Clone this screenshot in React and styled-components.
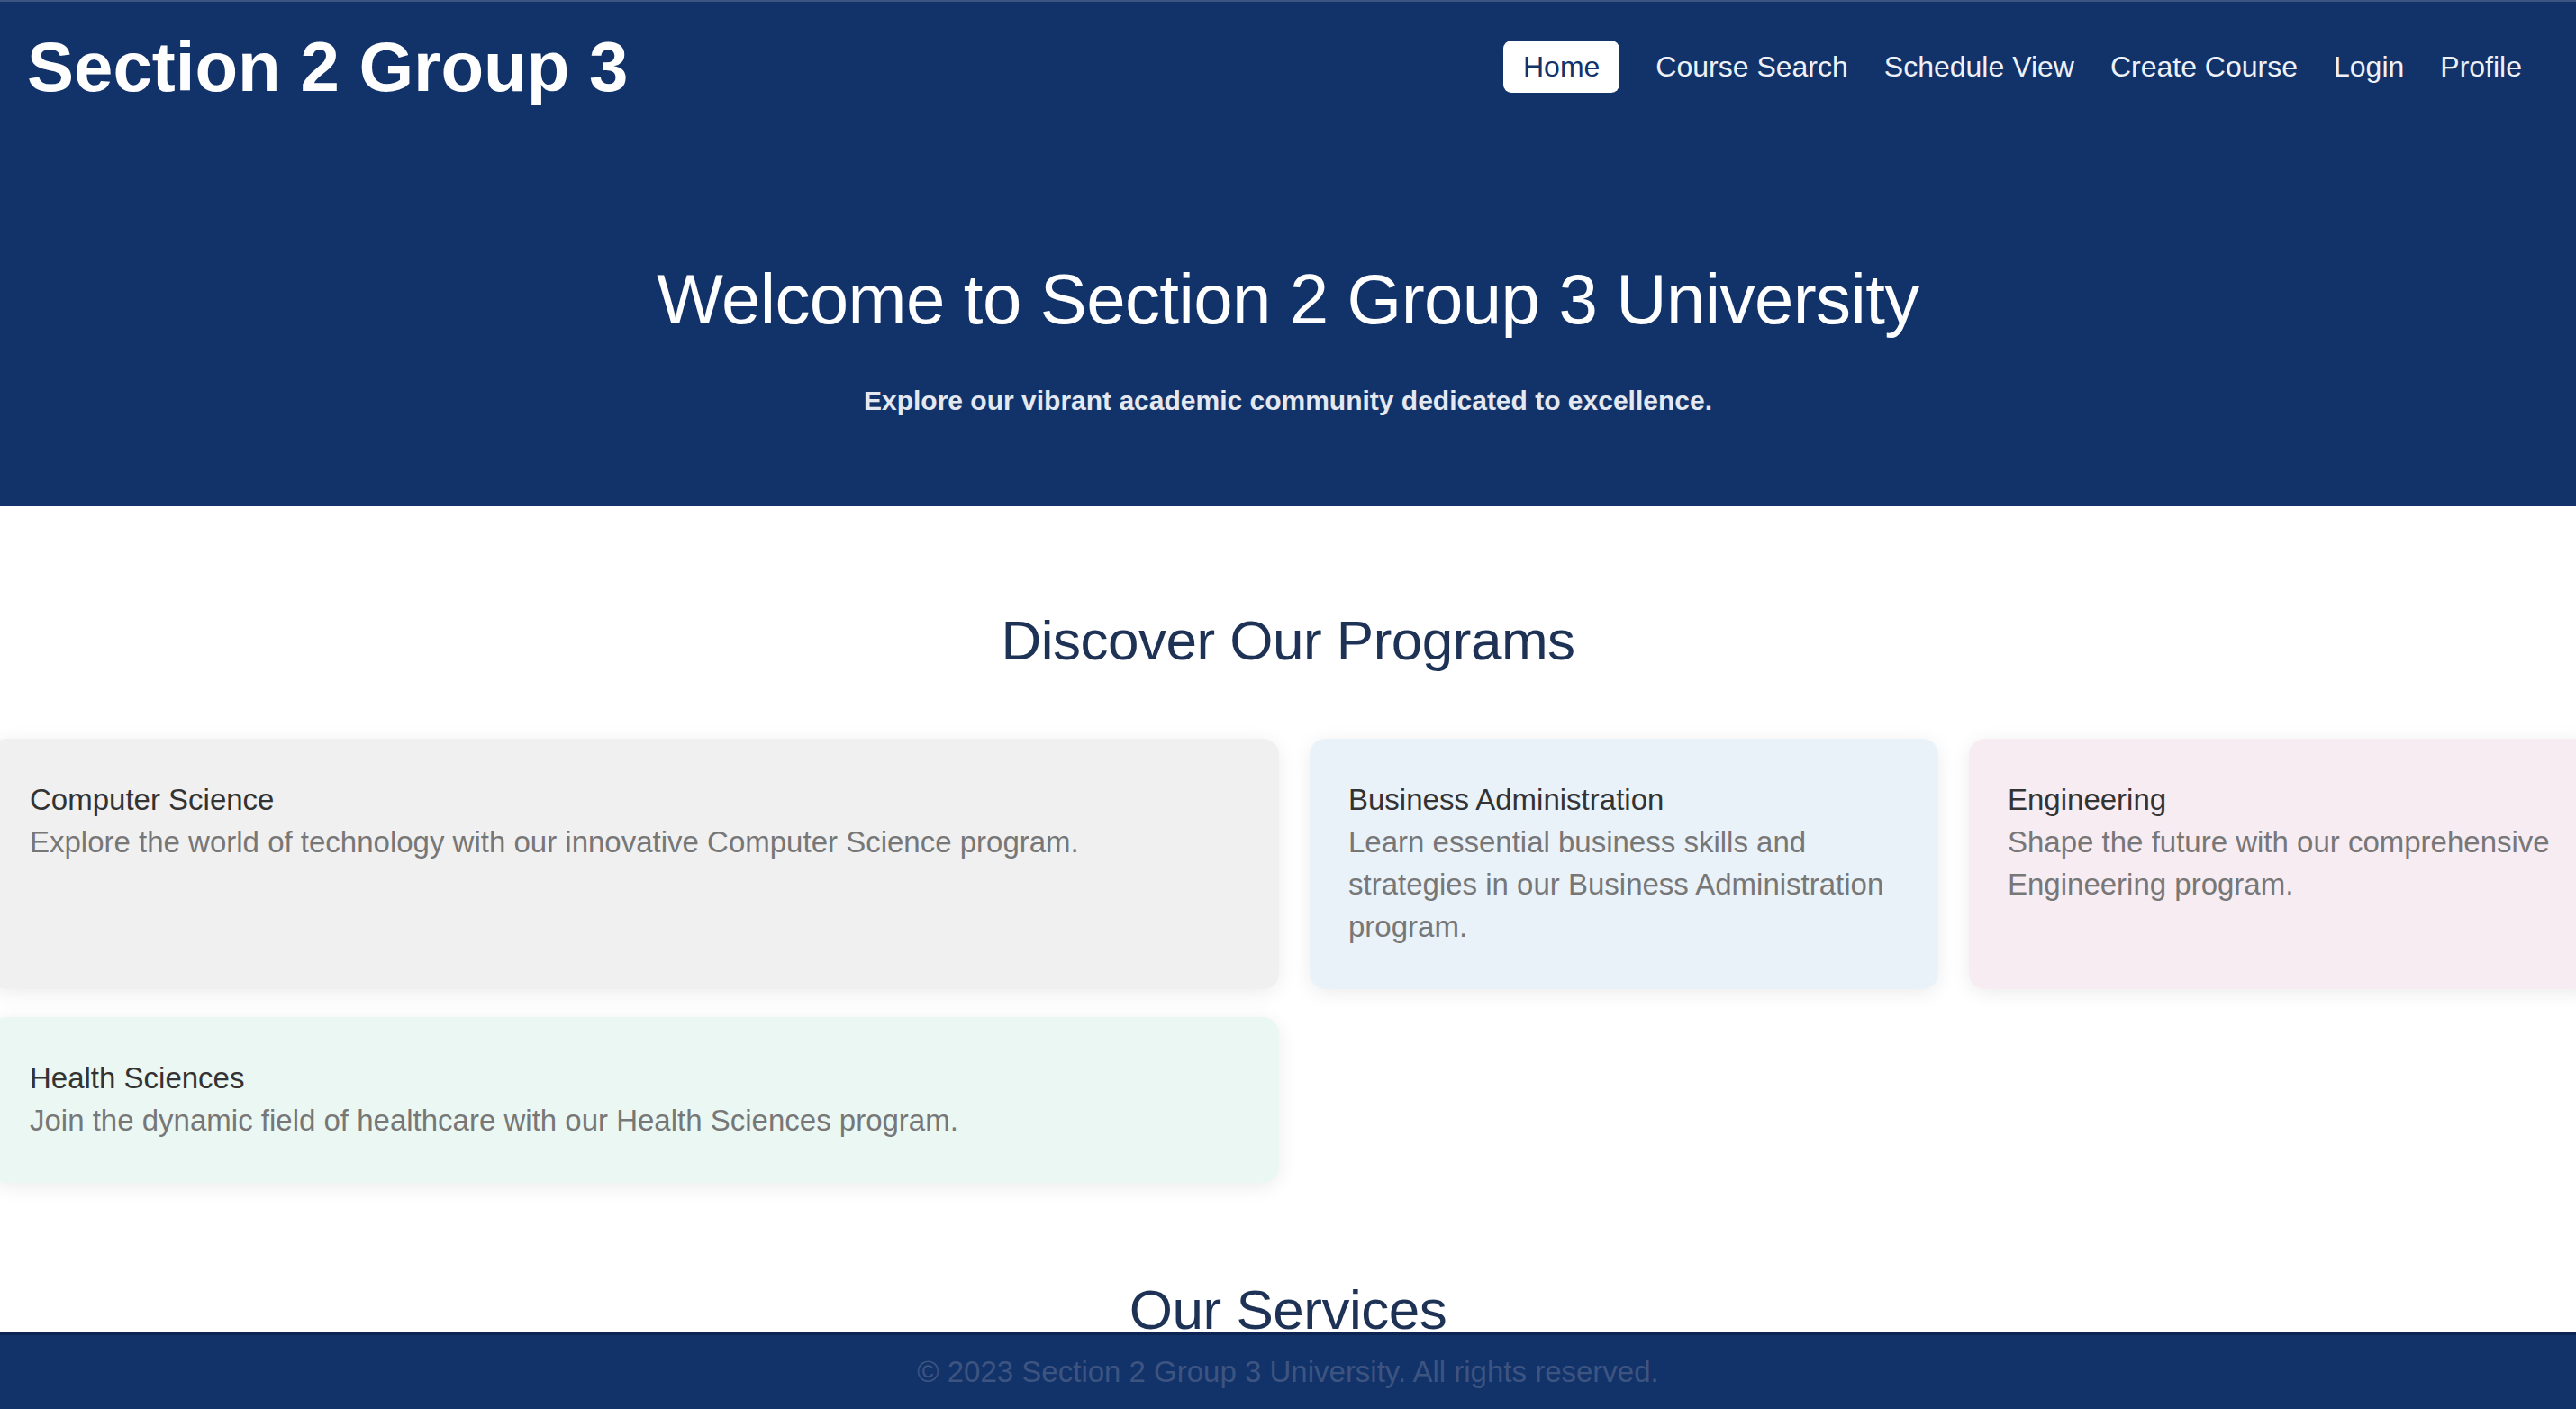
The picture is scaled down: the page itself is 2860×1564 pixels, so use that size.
import React from 'react';
import styled, { createGlobalStyle } from 'styled-components';

const navy = '#12326a';

const GlobalStyle = createGlobalStyle`
  html, body {
    margin: 0;
    padding: 0;
    background: #ffffff;
    overflow-x: hidden;
  }

  body {
    font-family: "Liberation Sans", Arial, sans-serif;
  }
`

const Page = styled.div`
  display: flex;
  flex-direction: column;
  min-height: 100vh;
  padding-bottom: 85px;
`

const Header = styled.header`
  display: flex;
  justify-content: space-between;
  align-items: center;
  background: ${navy};
  border-top: 2px solid #3d5582;
  height: 144px;
  padding: 0 40px 0 30px;
`

const Brand = styled.h1`
  margin: 0;
  font-size: 78px;
  line-height: 1;
  font-weight: 700;
  color: #ffffff;
`

const Nav = styled.nav`
  display: flex;
  align-items: center;
`

const NavLink = styled.a`
  font-size: 32px;
  line-height: 38px;
  color: #eef1f7;
  text-decoration: none;
  padding: 10px 20px;
  border-radius: 9px;

  ${(p) => p.$active && `
    background: #ffffff;
    color: ${navy};
    padding: 10px 22px;
    margin-right: 20px;
  `}
`

const Hero = styled.section`
  display: flex;
  flex-direction: column;
  align-items: center;
  background: ${navy};
  padding: 138px 0 97px;

  h2 {
    margin: 0;
    font-size: 78px;
    line-height: 96px;
    font-weight: 400;
    letter-spacing: -0.6px;
    color: #ffffff;
  }

  p {
    margin: 45px 0 0;
    font-size: 30px;
    line-height: 40px;
    font-weight: 700;
    color: #e4e8f0;
  }
`

const Section = styled.section`
  display: flex;
  flex-direction: column;
  align-items: center;
`

const SectionTitle = styled.h2`
  margin: ${(p) => p.$top}px 0 0;
  font-size: 62px;
  line-height: 74px;
  font-weight: 400;
  letter-spacing: -0.5px;
  color: #1e3256;
`

const CardGrid = styled.div`
  align-self: flex-start;
  display: grid;
  grid-template-columns: repeat(4, 698px);
  column-gap: 34px;
  row-gap: 31px;
  margin: 72px 0 0 -10px;
`

const Card = styled.div`
  grid-column: span ${(p) => p.$span};
  background: ${(p) => p.$bg};
  border-radius: 18px;
  box-shadow: 0 4px 22px rgba(0, 0, 0, 0.08);
  padding: 44px 43px 46px;

  h3 {
    margin: 0;
    font-size: 33px;
    line-height: 47px;
    font-weight: 400;
    color: #333333;
  }

  p {
    margin: 0;
    font-size: 33px;
    line-height: 47px;
    color: #777777;
  }
`

const ServiceList = styled.div`
  height: 400px;
`

const Footer = styled.footer`
  position: fixed;
  left: 0;
  right: 0;
  bottom: 0;
  height: 85px;
  display: flex;
  align-items: center;
  justify-content: center;
  background: ${navy};
  border-top: 3px solid #0d2552;
  box-sizing: border-box;

  p {
    margin: 0;
    font-size: 33px;
    color: #3d5480;
  }
`

const programs = [
  { title: 'Computer Science', text: 'Explore the world of technology with our innovative Computer Science program.', bg: '#f0f0f1', span: 2 },
  { title: 'Business Administration', text: 'Learn essential business skills and strategies in our Business Administration program.', bg: '#eaf2f9', span: 1 },
  { title: 'Engineering', text: 'Shape the future with our comprehensive Engineering program.', bg: '#f8ecf3', span: 1 },
  { title: 'Health Sciences', text: 'Join the dynamic field of healthcare with our Health Sciences program.', bg: '#ebf7f3', span: 2 },
];

const links = ['Home', 'Course Search', 'Schedule View', 'Create Course', 'Login', 'Profile'];

function App() {
  return (
    <Page>
      <GlobalStyle />

      <Header>
        <Brand>Section 2 Group 3</Brand>
        <Nav>
          {links.map((l) => (
            <NavLink key={l} href="#" $active={l === 'Home'}>{l}</NavLink>
          ))}
        </Nav>
      </Header>

      <Hero>
        <h2>Welcome to Section 2 Group 3 University</h2>
        <p>Explore our vibrant academic community dedicated to excellence.</p>
      </Hero>

      {/* Programs */}
      <Section>
        <SectionTitle $top={112}>Discover Our Programs</SectionTitle>
        <CardGrid>
          {programs.map((p) => (
            <Card key={p.title} $bg={p.bg} $span={p.span}>
              <h3>{p.title}</h3>
              <p>{p.text}</p>
            </Card>
          ))}
        </CardGrid>
      </Section>

      {/* Services */}
      <Section>
        <SectionTitle $top={104}>Our Services</SectionTitle>
        <ServiceList />
      </Section>

      <Footer>
        <p>© 2023 Section 2 Group 3 University. All rights reserved.</p>
      </Footer>
    </Page>
  );
}

export default App;
